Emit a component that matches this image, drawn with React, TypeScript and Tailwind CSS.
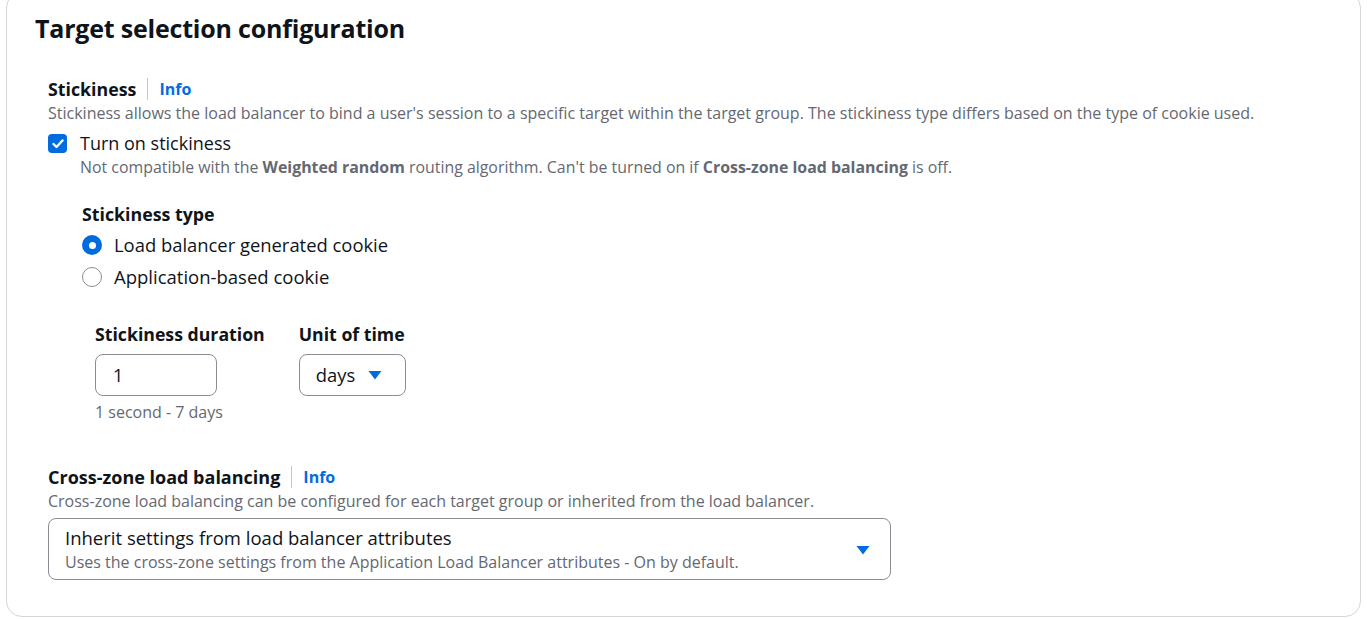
import React from "react";

function Caret() {
  return (
    <svg width="14" height="10" viewBox="0 0 14 10" className="shrink-0">
      <path d="M0.5 1 H13.5 L7 9.5 Z" fill="#006ce0" />
    </svg>
  );
}

function InfoLink() {
  return (
    <>
      <span className="mx-[11px] h-[22px] w-px bg-[#c6c6cd]" />
      <span className="text-[16px] font-bold text-[#006ce0]">Info</span>
    </>
  );
}

export default function App() {
  return (
    <div
      className="h-[619px] w-[1367px] overflow-hidden bg-white px-[6px] text-[#0f141a]"
      style={{ fontFamily: '"Open Sans", "Noto Sans", sans-serif' }}
    >
      <div className="-mt-[8px] h-[625px] rounded-[16px] border border-[#d5d5da] bg-white">
        <h2 className="pl-[28px] pt-[20px] text-[25px] font-bold leading-[30px] tracking-[-0.2px]">
          Target selection configuration
        </h2>

        <div className="pl-[41px]">
          {/* Stickiness */}
          <div className="mt-[34px] flex items-center leading-[24px]">
            <span className="text-[17.8px] font-bold">Stickiness</span>
            <InfoLink />
          </div>
          <p className="text-[16px] leading-[24px] text-[#656871]">
            Stickiness allows the load balancer to bind a user's session to a specific target within the target group. The stickiness type differs based on the type of cookie used.
          </p>

          <div className="mt-[6px] flex items-start">
            <div className="mt-[3px] flex h-[19px] w-[19px] items-center justify-center rounded-[4px] bg-[#006ce0]">
              <svg width="12" height="10" viewBox="0 0 12 10">
                <path d="M1.5 5 L4.5 8 L10.5 1.5" fill="none" stroke="white" strokeWidth="2.4" strokeLinecap="round" strokeLinejoin="round" />
              </svg>
            </div>
            <div className="ml-[13px]">
              <div className="text-[18px] leading-[24px]">Turn on stickiness</div>
              <div className="text-[15.9px] leading-[24px] text-[#656871]">
                Not compatible with the <b className="font-bold">Weighted random</b> routing algorithm. Can't be turned on if <b className="font-bold">Cross-zone load balancing</b> is off.
              </div>
            </div>
          </div>

          <div className="pl-[34px]">
            <div className="mt-[23px] text-[17.8px] font-bold leading-[24px]">Stickiness type</div>
            <div className="mt-[7px] flex items-center leading-[24px]">
              <span className="flex h-[20px] w-[20px] items-center justify-center rounded-full bg-[#006ce0]">
                <span className="h-[7px] w-[7px] rounded-full bg-white" />
              </span>
              <span className="ml-[12px] text-[18.4px]">Load balancer generated cookie</span>
            </div>
            <div className="mt-[8px] flex items-center leading-[24px]">
              <span className="h-[20px] w-[20px] rounded-full border-[1.5px] border-[#8c8c94]" />
              <span className="ml-[12px] text-[18.5px]">Application-based cookie</span>
            </div>

            <div className="mt-[33px] flex pl-[13px]">
              <div>
                <div className="text-[17.7px] font-bold leading-[24px]">Stickiness duration</div>
                <div className="mt-[8px] flex h-[42px] w-[122px] items-center rounded-[8px] border border-[#8c8c94] pl-[17px] text-[18px]">
                  1
                </div>
                <div className="mt-[4px] text-[16px] leading-[24px] text-[#656871]">1 second - 7 days</div>
              </div>
              <div className="ml-[34px]">
                <div className="text-[17.7px] font-bold leading-[24px]">Unit of time</div>
                <div className="mt-[8px] flex h-[42px] w-[107px] items-center rounded-[8px] border border-[#8c8c94] pl-[16px] text-[18.4px]">
                  <span>days</span>
                  <span className="ml-[13px]">
                    <Caret />
                  </span>
                </div>
              </div>
            </div>
          </div>

          {/* Cross-zone */}
          <div className="mt-[41px] flex items-center leading-[24px]">
            <span className="text-[18px] font-bold">Cross-zone load balancing</span>
            <InfoLink />
          </div>
          <p className="text-[16px] leading-[24px] text-[#656871]">
            Cross-zone load balancing can be configured for each target group or inherited from the load balancer.
          </p>
          <div className="mt-[5px] flex h-[62px] w-[843px] items-center justify-between rounded-[8px] border border-[#8c8c94] pl-[16px] pr-[20px] pt-[2px]">
            <div>
              <div className="text-[18.5px] leading-[24px]">Inherit settings from load balancer attributes</div>
              <div className="text-[16px] leading-[24px] text-[#656871]">
                Uses the cross-zone settings from the Application Load Balancer attributes - On by default.
              </div>
            </div>
            <Caret />
          </div>
        </div>
      </div>
    </div>
  );
}
